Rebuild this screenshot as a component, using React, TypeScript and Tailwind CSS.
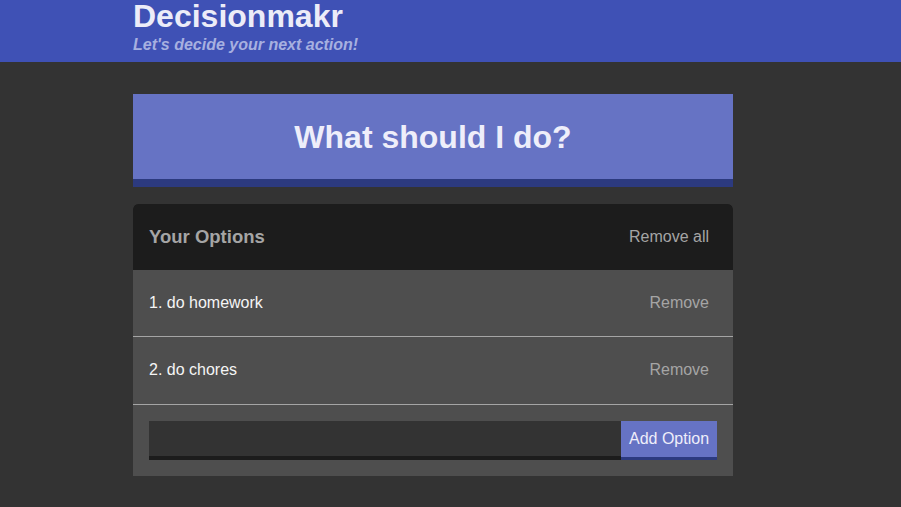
import React from "react";

export default function App() {
  const options = ["do homework", "do chores"];
  return (
    <div
      className="min-h-[507px] bg-[#333333]"
      style={{ fontFamily: '"Liberation Sans", Arial, sans-serif' }}
    >
      <header className="h-[62px] bg-[#3f51b5]">
        <div className="mx-auto w-[635px]">
          <h1 className="text-[32px] font-bold leading-[32px] text-[#ececf8]">Decisionmakr</h1>
          <h2 className="mt-1 text-[16px] font-bold italic leading-[18px] text-[#a7b0e0]">
            Let's decide your next action!
          </h2>
        </div>
      </header>
      <div className="mx-auto w-[635px] pt-8">
        <div className="w-[600px]">
          <button className="flex h-[93px] w-full items-center justify-center border-b-8 border-[#2c3a7f] bg-[#6673c4] pb-0 text-[32px] font-bold text-[#eeeefa]">
            What should I do?
          </button>
          <div className="mt-[17px] overflow-hidden rounded-t-[5px] bg-[#4e4e4e]">
            <div className="flex h-[66px] items-center justify-between bg-[#1c1c1c] pl-4 pr-6">
              <h3 className="text-[18.5px] font-bold text-[#a5a5a5]">Your Options</h3>
              <button className="text-[16px] text-[#a5a5a5]">Remove all</button>
            </div>
            {options.map((o, i) => (
              <div
                key={o}
                className="flex items-center justify-between border-b border-[#a5a5a5] pl-4 pr-6 py-6 text-[16px] leading-[18.4px]"
              >
                <p className="text-[#f5f5f5]">
                  {i + 1}. {o}
                </p>
                <button className="text-[#a5a5a5]">Remove</button>
              </div>
            ))}
            <form className="flex px-4 py-4" onSubmit={(e) => e.preventDefault()}>
              <input
                type="text"
                className="h-[39px] flex-1 border-b-4 border-[#1c1c1c] bg-[#333333] px-2 text-[16px] text-white outline-none"
              />
              <button className="h-[39px] w-[96px] border-b-[3px] border-[#2c3a7f] bg-[#6673c4] text-[16px] text-[#eeeefa]">
                Add Option
              </button>
            </form>
          </div>
        </div>
      </div>
    </div>
  );
}
